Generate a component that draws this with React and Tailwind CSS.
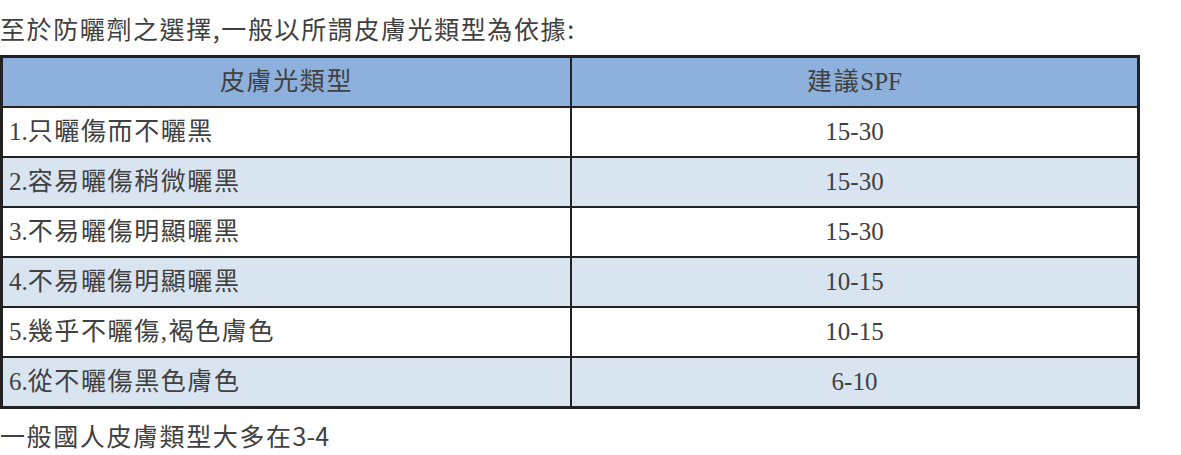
import React from "react";

const rows = [
	{ type: "1.只曬傷而不曬黑", spf: "15-30" },
	{ type: "2.容易曬傷稍微曬黑", spf: "15-30" },
	{ type: "3.不易曬傷明顯曬黑", spf: "15-30" },
	{ type: "4.不易曬傷明顯曬黑", spf: "10-15" },
	{ type: "5.幾乎不曬傷,褐色膚色", spf: "10-15" },
	{ type: "6.從不曬傷黑色膚色", spf: "6-10" },
];

const sans = "font-['Noto_Sans_CJK_TC',sans-serif]";
const serif = "font-['Liberation_Serif','Noto_Sans_CJK_TC',serif]";

// CJK runs get a bit of extra spacing, latin runs stay tight
const Txt = ({ children }) => {
	const parts = children.split(/([0-9A-Za-z.\-]+)/).filter(Boolean);
	return (
		<>
			{parts.map((p, i) =>
				/^[0-9A-Za-z.\-]+$/.test(p) ? (
					<span key={i}>{p}</span>
				) : (
					<span key={i} className="tracking-[1.6px]">
						{p}
					</span>
				)
			)}
		</>
	);
};

const App = () => {
	return (
		<div className="w-[1181px] h-[455px] bg-white text-[#404040]">
			<p className={`${sans} text-[25px] leading-[45px] pt-[6px] h-[55px]`}>
				<Txt>至於防曬劑之選擇,一般以所謂皮膚光類型為依據:</Txt>
			</p>
			<div className={`${serif} w-[1140px] border-[3px] border-[#222] text-[25px]`}>
				<div className="flex h-[50px] border-b-2 border-[#222] bg-[#8db0dc]">
					<div className="w-[569px] border-r-2 border-[#222] flex items-center justify-center">
						<Txt>皮膚光類型</Txt>
					</div>
					<div className="flex-1 flex items-center justify-center">
						<Txt>建議SPF</Txt>
					</div>
				</div>
				{rows.map((row, i) => (
					<div
						key={i}
						className={`flex ${i < rows.length - 1 ? "h-[50px] border-b-2 border-[#222]" : "h-[48px]"} ${
							i % 2 === 1 ? "bg-[#d9e4f1]" : "bg-white"
						}`}
					>
						<div className="w-[569px] border-r-2 border-[#222] flex items-center pl-[6px]">
							<Txt>{row.type}</Txt>
						</div>
						<div className="flex-1 flex items-center justify-center">{row.spf}</div>
					</div>
				))}
			</div>
			<p className={`${sans} text-[25px] leading-[36px] pt-[8px]`}>
				<Txt>一般國人皮膚類型大多在</Txt>3-4
			</p>
		</div>
	);
};

export default App;
